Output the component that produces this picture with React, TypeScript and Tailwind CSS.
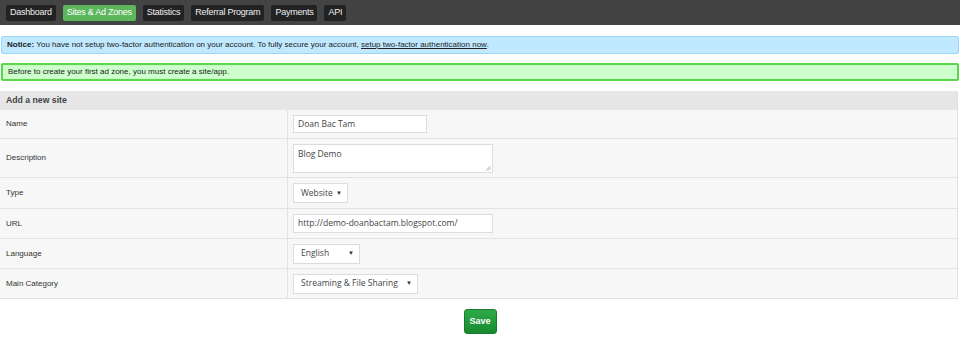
import React from 'react';

const TABS = ['Dashboard', 'Sites & Ad Zones', 'Statistics', 'Referral Program', 'Payments', 'API'];

const Select: React.FC<{ value: string; width: string }> = ({ value, width }) => (
  <div className={`${width} h-[20px] bg-white border border-[#dcdcdc] flex items-center justify-between pl-[7px] pr-[5px] text-[8.5px] text-[#444] font-['Open_Sans',sans-serif]`}>
    <span>{value}</span>
    <span className="text-[6px] text-[#333]">▼</span>
  </div>
);

const App: React.FC = () => {
  const rows: { label: string; h: string; field: React.ReactNode }[] = [
    {
      label: 'Name',
      h: 'h-[29px]',
      field: (
        <div className="w-[134px] h-[18px] bg-white border border-[#dcdcdc] flex items-center px-[4px] text-[8.5px] text-[#444] font-['Open_Sans',sans-serif]">Doan Bac Tam</div>
      ),
    },
    {
      label: 'Description',
      h: 'h-[39px]',
      field: (
        <div className="relative w-[200px] h-[29px] bg-white border border-[#dcdcdc] px-[4px] pt-[3px] text-[8.5px] text-[#444] font-['Open_Sans',sans-serif]">
          Blog Demo
          <svg className="absolute right-[1px] bottom-[1px]" width="6" height="6" viewBox="0 0 6 6">
            <path d="M1 5.5 L5.5 1 M3 5.5 L5.5 3" stroke="#999" strokeWidth="0.8" />
          </svg>
        </div>
      ),
    },
    { label: 'Type', h: 'h-[31px]', field: <Select value="Website" width="w-[55px]" /> },
    {
      label: 'URL',
      h: 'h-[30px]',
      field: (
        <div className="w-[200px] h-[19px] bg-white border border-[#dcdcdc] flex items-center px-[4px] text-[8.5px] text-[#444] font-['Open_Sans',sans-serif]">http://demo-doanbactam.blogspot.com/</div>
      ),
    },
    { label: 'Language', h: 'h-[30px]', field: <Select value="English" width="w-[67px]" /> },
    { label: 'Main Category', h: 'h-[30px]', field: <Select value="Streaming & File Sharing" width="w-[125px]" /> },
  ];

  return (
    <div className="w-[960px] h-[339px] bg-white font-['Liberation_Sans',Arial,sans-serif] overflow-hidden">
      <div className="h-[25px] bg-[#434343] flex items-center gap-[7px] pl-[6px]">
        {TABS.map((t, i) => (
          <div
            key={t}
            className={`h-[16px] px-[4px] rounded-[2px] flex items-center text-[9px] tracking-[-0.25px] ${
              i === 1 ? 'bg-[#5cb65c] text-white' : 'bg-[#222] text-[#eee]'
            }`}
          >
            {t}
          </div>
        ))}
      </div>

      <div className="mx-[1px] mt-[11px] h-[18px] bg-[#c0e8ff] border border-[#9cd6fa] rounded-[2px] flex items-center px-[5px] text-[8px] text-[#222]">
        <b>Notice:</b>&nbsp;You have not setup two-factor authentication on your account. To fully secure your account,&nbsp;
        <span className="underline">setup two-factor authentication now</span>.
      </div>

      <div className="mx-[1px] mt-[9px] h-[18px] bg-[#ccffcc] border-2 border-[#5ad84a] rounded-[2px] flex items-center px-[5px] text-[8px] text-[#222]">
        Before to create your first ad zone, you must create a site/app.
      </div>

      <div className="mt-[10px] w-[958px] border-r border-[#e0e0e0]">
        <div className="h-[19px] bg-[#e6e6e6] flex items-center px-[6px] text-[8.7px] font-bold text-[#444]">Add a new site</div>
        {rows.map(r => (
          <div key={r.label} className={`${r.h} bg-[#f7f7f7] border-b border-[#e2e2e2] flex`}>
            <div className="w-[288px] border-r border-[#e2e2e2] flex items-center pl-[6px] text-[8px] text-[#333]">{r.label}</div>
            <div className="flex-1 flex items-center pl-[5px]">{r.field}</div>
          </div>
        ))}
      </div>

      <div className="flex justify-center mt-[10px]">
        <button className="w-[33px] h-[25px] rounded-[3px] bg-gradient-to-b from-[#2faa48] to-[#178a30] border border-[#1a7a2e] text-white text-[9px] font-bold">
          Save
        </button>
      </div>
    </div>
  );
};

export default App;
